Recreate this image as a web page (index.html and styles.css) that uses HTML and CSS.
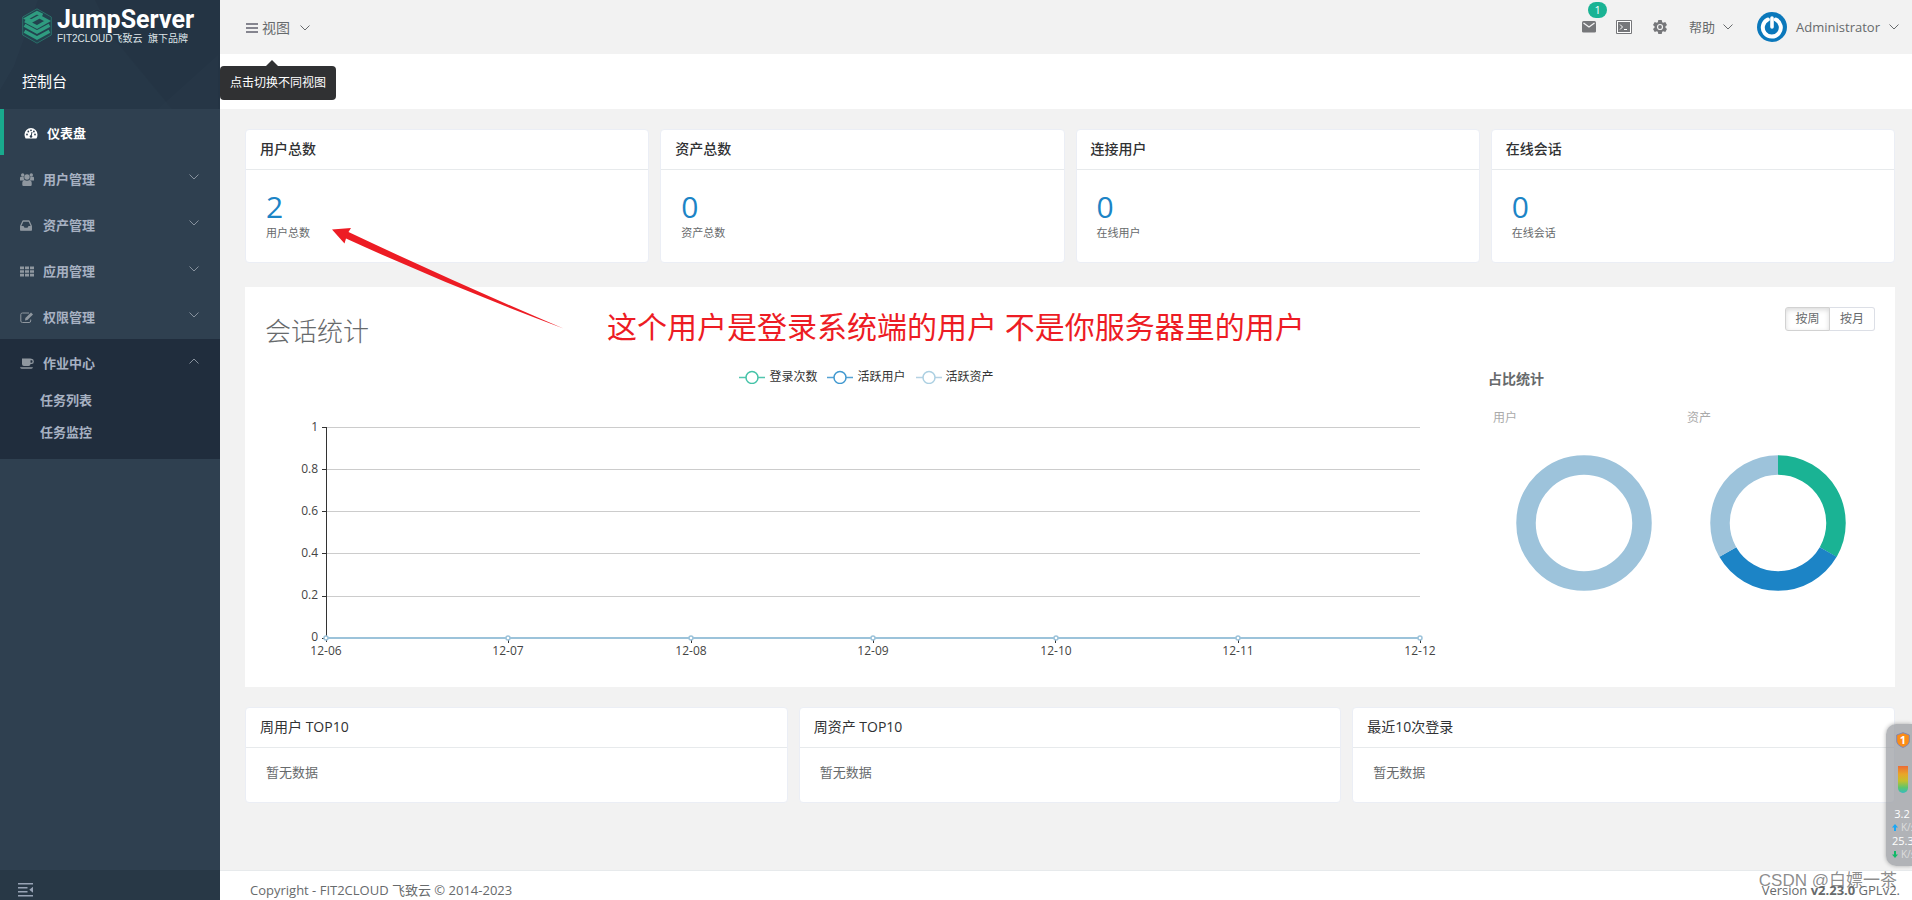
FILE: index.html
```html
<!DOCTYPE html>
<html lang="zh-CN">
<head>
<meta charset="utf-8">
<title>JumpServer</title>
<link rel="stylesheet" href="styles.css">
</head>
<body>
<svg class="defs" aria-hidden="true">
  <symbol id="chev" viewBox="0 0 10 6"><path d="M.5.5 5 5 9.5.5" fill="none" stroke="currentColor"/></symbol>
</svg>
<div class="app">
  <aside class="sidebar">
    <div class="side-head">
      <svg class="side-facets" viewBox="0 0 220 109" preserveAspectRatio="none" aria-hidden="true"><path d="M115 40 172 109H220V0H95z" fill="#22313f" opacity=".35"/><path d="M0 0H38L14 66 0 90z" fill="#2c3f4f" opacity=".4"/><path d="M158 109 218 55V109z" fill="#2b3c4b" opacity=".3"/></svg>
      <a class="brand" href="#">
        <svg class="brand-mark" viewBox="0 0 30 36" aria-hidden="true">
          <path d="M15 .8 29.300 9v18L15 35.200.7 27V9z" fill="#23424e" stroke="#2a7069"/>
          <g fill="none" stroke="#2f9c80" stroke-width="3.400"><path d="M20.500 7.200 15 4.600 4.500 10.500 9 13.200 17.500 8.700 25.500 13 15 19 3 12.800"/><path d="M2.500 17.200 15 24l12.500-6.800M2.500 23.200 15 30l12.500-6.800"/></g>
        </svg>
        <span class="brand-text"><span class="brand-name">JumpServer</span><span class="brand-sub">FIT2CLOUD飞致云&nbsp; 旗下品牌</span></span>
      </a>
      <div class="view-name">控制台</div>
    </div>
    <nav class="menu">
      <a class="item active" href="#"><svg viewBox="0 0 14 12"><path d="M7 .5A6.500 6.500 0 0 0 .5 7c0 1.500.4 2.800 1.100 4h10.800A7 7 0 0 0 13.500 7 6.500 6.500 0 0 0 7 .5z" fill="currentColor"/><g fill="#2f4050"><circle cx="3" cy="7" r=".9"/><circle cx="4.300" cy="4" r=".9"/><circle cx="7" cy="2.800" r=".9"/><circle cx="9.900" cy="4" r=".9"/><circle cx="11" cy="7" r=".9"/></g><path d="M8 4.500 7 9" stroke="#2f4050"/><circle cx="7" cy="9" r="1.300" fill="#2f4050"/></svg><span>仪表盘</span></a>
      <a class="item" href="#"><svg viewBox="0 0 14 13"><g fill="currentColor"><circle cx="2.700" cy="2" r="1.700"/><circle cx="11.300" cy="2" r="1.700"/><circle cx="7" cy="4" r="2.700"/><path d="M0 7.500V5q0-1.200 1-1.200h2.700Q3.500 6 4.500 6.600L3 7.500zM14 7.500V5q0-1.200-1-1.200h-2.700Q10.500 6 9.500 6.600L11 7.500zM2.300 12V9.500Q2.500 7.300 4.500 7q2.500 1.500 5 0 2 .3 2.200 2.500V12q0 1-1.200 1h-7q-1.200 0-1.200-1z"/></g></svg><span>用户管理</span><svg class="chev"><use href="#chev"/></svg></a>
      <a class="item" href="#"><svg viewBox="0 0 14 12"><path d="M3 1.500h6L11.300 6.500V10.500H.7V6.500z" fill="none" stroke="currentColor" stroke-width="1.300" stroke-linejoin="round"/><path d="M.5 6.500H3.500L4.500 8.300h3L8.500 6.500h3v4.300H.5z" fill="currentColor"/></svg><span>资产管理</span><svg class="chev"><use href="#chev"/></svg></a>
      <a class="item" href="#"><svg viewBox="0 0 14 12"><path d="M0 1h4v2.700H0zM5 1h4v2.700H5zM10 1h4v2.700h-4zM0 4.700h4v2.600H0zM5 4.700h4v2.600H5zM10 4.700h4v2.600h-4zM0 8.300h4V11H0zM5 8.300h4V11H5zM10 8.300h4V11h-4z" fill="currentColor"/></svg><span>应用管理</span><svg class="chev"><use href="#chev"/></svg></a>
      <a class="item" href="#"><svg viewBox="0 0 14 12"><path d="M9 1.500H2.500Q.8 1.500.8 3v6.500Q.8 11 2.500 11H9q1.700 0 1.700-1.500V8" fill="none" stroke="currentColor"/><path d="m5 9 .4-2.500L11 1l2 2-5.600 5.600z" fill="currentColor"/></svg><span>权限管理</span><svg class="chev"><use href="#chev"/></svg></a>
      <div class="group">
        <a class="item" href="#"><svg viewBox="0 0 14 12"><path d="M2 1h8.500v5.500Q10.500 8.500 8.500 8.500H4Q2 8.500 2 6.500zM0 9.700h13Q12.500 11.300 11 11.300H2Q.5 11.300 0 9.700z" fill="currentColor"/><path d="M10 2h1.500q1.700 0 1.700 1.900T11.500 5.800H10" fill="none" stroke="currentColor" stroke-width="1.300"/></svg><span>作业中心</span><svg class="chev up"><use href="#chev"/></svg></a>
        <a class="sub" href="#">任务列表</a>
        <a class="sub" href="#">任务监控</a>
      </div>
    </nav>
    <button class="collapse" aria-label="收起菜单"><svg viewBox="0 0 15 14" fill="currentColor"><path d="M0 0h15v1.500H0zM0 4h9.500v1.500H0zM0 8h9.500v1.500H0zM0 12h15v1.500H0zM15 3.700v6L11.300 6.700z"/></svg></button>
  </aside>

  <div class="main">
    <header class="topbar">
      <button class="view-btn"><svg class="bars" viewBox="0 0 12 10"><path d="M0 1h12M0 5h12M0 9h12" stroke="#85858f" stroke-width="2"/></svg><span>视图</span><svg class="chev"><use href="#chev"/></svg></button>
      <div class="tooltip" role="tooltip">点击切换不同视图</div>
      <div class="tools">
        <button class="tool mail" aria-label="消息"><svg viewBox="0 0 14 12"><path d="M0 1.500Q0 0 1.500 0h11Q14 0 14 1.500v9q0 1-1.500 1h-11Q0 11.500 0 10.500z" fill="#76777a"/><path d="m1.500 2 5.500 4 5.500-4" fill="none" stroke="#f3f3f3" stroke-width="1.300"/></svg><span class="badge">1</span></button>
        <button class="tool term" aria-label="终端"><svg viewBox="0 0 16 14"><path d="M.5.5h15v13H.5z" fill="#fff" stroke="#76777a"/><path d="M2 2h12v10H2z" fill="#76777a"/><path d="m4 4.500 2.500 2.500L4 9.500M8 9.500h3" fill="none" stroke="#fff"/></svg></button>
        <button class="tool gear" aria-label="设置"><svg viewBox="0 0 14 14"><path d="M5.300 0h3.400l.5 2.200 1 .6 2.100-.7L14 5 12.400 6.400v1.200L14 9l-1.700 2.900-2.100-.7-1 .6-.5 2.200H5.300l-.5-2.200-1-.6-2.100.7L0 9l1.600-1.400V6.400L0 5l1.700-2.900 2.100.7 1-.6z" fill="#76777a"/><circle cx="7" cy="7" r="2.500" fill="none" stroke="#f3f3f3" stroke-width="1.200"/></svg></button>
        <button class="help"><span>帮助</span><svg class="chev"><use href="#chev"/></svg></button>
        <button class="user"><svg class="avatar" viewBox="0 0 30 30"><circle cx="15" cy="15" r="15" fill="#0b78bb"/><path d="M10.800 7.500a9 9 0 1 0 8 0" fill="none" stroke="#fff" stroke-width="4" stroke-linecap="round"/><path d="M15 6v9" stroke="#fff" stroke-width="3.600" stroke-linecap="round"/></svg><span>Administrator</span><svg class="chev"><use href="#chev"/></svg></button>
      </div>
    </header>
    <div class="page-head"></div>

    <main class="content">
      <section class="cards four">
        <article class="card stat"><h2>用户总数</h2><div class="body"><a href="#">2</a><small>用户总数</small></div></article>
        <article class="card stat"><h2>资产总数</h2><div class="body"><a href="#">0</a><small>资产总数</small></div></article>
        <article class="card stat"><h2>连接用户</h2><div class="body"><a href="#">0</a><small>在线用户</small></div></article>
        <article class="card stat"><h2>在线会话</h2><div class="body"><a href="#">0</a><small>在线会话</small></div></article>
      </section>

      <section class="panel">
        <div class="panel-top">
          <h2>会话统计</h2>
          <div class="switch"><button class="on">按周</button><button>按月</button></div>
        </div>
        <div class="panel-body">
          <div class="trend">
            <div class="legend">
              <span><svg viewBox="0 0 26 14"><path d="M0 7.500h26" stroke="#1ab394" stroke-width="1.500" opacity=".75"/><circle cx="13" cy="7.500" r="6" fill="#fff" stroke="#45c3a8" stroke-width="1.500"/></svg>登录次数</span>
              <span><svg viewBox="0 0 26 14"><path d="M0 7.500h26" stroke="#1c84c6" stroke-width="1.500" opacity=".75"/><circle cx="13" cy="7.500" r="6" fill="#fff" stroke="#4199d0" stroke-width="1.500"/></svg>活跃用户</span>
              <span><svg viewBox="0 0 26 14"><path d="M0 7.500h26" stroke="#9cc3da" stroke-width="1.500" opacity=".75"/><circle cx="13" cy="7.500" r="6" fill="#fff" stroke="#acd0e2" stroke-width="1.500"/></svg>活跃资产</span>
            </div>
            <svg class="plot" viewBox="0 0 1203 260">
              <path d="M61 37.500H1155M61 79.500H1155M61 121.500H1155M61 163.500H1155M61 206.500H1155" stroke="#ccc"/>
              <path d="M61.500 37V252M57 37.500h4M57 79.500h4M57 121.500h4M57 163.500h4M57 206.500h4M57 248.500h4M243.500 249v4M426.500 249v4M608.500 249v4M790.500 249v4M973.500 249v4M1155.500 249v4" stroke="#333"/>
              <path d="M61 248H1155" stroke="#9cc3da" stroke-width="2"/>
              <g fill="#fff" stroke="#9cc3da" stroke-width="1.500"><circle cx="61" cy="248" r="2"/><circle cx="243" cy="248" r="2"/><circle cx="426" cy="248" r="2"/><circle cx="608" cy="248" r="2"/><circle cx="791" cy="248" r="2"/><circle cx="973" cy="248" r="2"/><circle cx="1155" cy="248" r="2"/></g>
              <g text-anchor="end"><text x="53" y="41">1</text><text x="53" y="83">0.8</text><text x="53" y="125">0.6</text><text x="53" y="167">0.4</text><text x="53" y="209">0.2</text><text x="53" y="251">0</text></g>
              <g text-anchor="middle"><text x="61" y="265">12-06</text><text x="243" y="265">12-07</text><text x="426" y="265">12-08</text><text x="608" y="265">12-09</text><text x="791" y="265">12-10</text><text x="973" y="265">12-11</text><text x="1155" y="265">12-12</text></g>
            </svg>
          </div>
          <div class="ratio">
            <h3>占比统计</h3>
            <div class="pies">
              <figure><figcaption>用户</figcaption><svg viewBox="0 0 136 136"><circle cx="68" cy="68" r="58" fill="none" stroke="#9dc3db" stroke-width="19.500"/></svg></figure>
              <figure><figcaption>资产</figcaption><svg viewBox="0 0 136 136" fill="none" stroke-width="19.500"><path d="M68 10A58 58 0 0 1 118.230 97" stroke="#1ab394"/><path d="M118.230 97A58 58 0 0 1 17.770 97" stroke="#1c84c6"/><path d="M17.770 97A58 58 0 0 1 68 10" stroke="#9dc3db"/></svg></figure>
            </div>
          </div>
        </div>
      </section>

      <section class="cards three">
        <article class="card"><h2>周用户 TOP10</h2><p>暂无数据</p></article>
        <article class="card"><h2>周资产 TOP10</h2><p>暂无数据</p></article>
        <article class="card"><h2>最近10次登录</h2><p>暂无数据</p></article>
      </section>
    </main>

    <footer class="footer"><span>Copyright - FIT2CLOUD 飞致云 © 2014-2023</span><span class="version">Version <b>v2.23.0</b> GPLv2.</span></footer>
  </div>
</div>

<svg class="arrow" viewBox="0 0 232 102" aria-hidden="true"><path d="M0 1.500 19 0 16.500 4 Q120 53 231.500 100.500 120 59 14 10.500L12.500 15.500z" fill="#ed1c24"/></svg>
<div class="note">这个用户是登录系统端的用户 不是你服务器里的用户</div>

<aside class="monitor">
  <svg class="shield" viewBox="0 0 14 16"><path d="M7 .7 13.300 3v6q0 4-6.300 6.500Q.7 13 .7 9V3z" fill="#fb8c17" stroke="#8087b5"/></svg><span class="count">1</span>
  <div class="gauge"></div>
  <div class="rate">3.2</div>
  <div class="unit"><svg viewBox="0 0 6 7"><path d="M3 0 6 3.500H4V7H2V3.500H0z" fill="#1aa7f5"/></svg>K/s</div>
  <div class="rate">25.3</div>
  <div class="unit"><svg viewBox="0 0 6 7"><path d="M3 7 6 3.500H4V0H2v3.500H0z" fill="#10b967"/></svg>K/s</div>
</aside>
<div class="watermark">CSDN @白嫖一茶</div>
</body>
</html>
```
FILE: styles.css
```css
* { box-sizing: border-box; }
body {
  margin: 0;
  font: 13px/20px "Open Sans", "Noto Sans CJK SC", sans-serif;
  color: #676a6c;
  background: #f3f3f4;
  position: relative;
  overflow: hidden;
}
a { color: inherit; text-decoration: none; }
button { border: 0; background: none; padding: 0; margin: 0; font: inherit; color: inherit; }
h2, h3, p, figure { margin: 0; }
svg { display: block; flex: none; }
.defs { position: absolute; width: 0; height: 0; }
.chev { width: 10px; height: 6px; }
.app { display: flex; min-height: 100vh; }

/* Sidebar */
.sidebar { flex: none; width: 220px; display: flex; flex-direction: column; background: #2f4050; color: #a7b1c2; }
.side-head { height: 109px; background: #263747; position: relative; color: #fff; }
.side-facets { position: absolute; inset: 0; width: 100%; height: 100%; }
.brand { position: relative; display: flex; gap: 5px; padding: 8px 0 0 22px; }
.brand-mark { width: 30px; height: 36px; }
.brand-text { display: flex; flex-direction: column; white-space: nowrap; }
.brand-name { font: 700 25px/24px Roboto, sans-serif; }
.brand-sub { font: 10px/14px "Liberation Sans", "Noto Sans CJK SC", sans-serif; color: #dfe4e8; }
.view-name { position: relative; padding: 25px 0 0 22px; font-size: 15px; }
.menu { flex: 1; font-weight: 600; }
.item { display: flex; align-items: center; height: 46px; padding: 2px 21px 0 20px; gap: 9px; }
.item > svg:first-child { width: 14px; height: 13px; color: #8f979f; }
.item span { flex: 1; }
.item .chev { margin-bottom: 5px; color: #87919d; }
.chev.up { transform: scaleY(-1); }
.active { color: #fff; border-left: 4px solid #19aa8d; }
.active > svg:first-child { color: #fff; }
.group { background: #202d3d; padding-bottom: 10px; }
.sub { display: block; height: 32px; padding-left: 40px; line-height: 30px; }
.collapse { height: 30px; padding: 10px 17px 0 18px; background: #283846; color: #98a3b5; }
.collapse svg { width: 15px; height: 14px; }

/* Top bar */
.main { flex: 1; min-width: 0; display: flex; flex-direction: column; }
.topbar { position: relative; height: 54px; display: flex; justify-content: space-between; padding: 0 13px 0 26px; background: #f2f2f2; }
.view-btn { display: flex; align-items: center; gap: 4px; padding-top: 2px; font-size: 14px; }
.bars { width: 12px; height: 10px; }
.view-btn .chev { margin-left: 6px; }
.tooltip { position: absolute; z-index: 3; left: 0; top: 66px; padding: 7px 10px; border-radius: 4px; background: #303133; color: #fff; font-size: 12px; }
.tooltip::before { content: ""; position: absolute; left: 46px; top: -6px; border: 6px solid transparent; border-top: 0; border-bottom-color: #303133; }
.tools { display: flex; align-items: center; }
.tool { position: relative; }
.mail svg { width: 14px; height: 12px; }
.term { margin: 0 21px 0 20px; }
.term svg { width: 16px; height: 14px; }
.gear svg { width: 14px; height: 14px; }
.badge { position: absolute; left: 6px; top: -19px; width: 19px; height: 16px; border-radius: 8px; background: #1ab394; color: #fff; font-size: 11px; line-height: 16px; }
.help { display: flex; align-items: center; gap: 8px; margin-left: 22px; }
.user { display: flex; align-items: center; gap: 9px; margin-left: 24px; }
.avatar { width: 30px; height: 30px; }
.page-head { height: 55px; background: #fff; }

/* Content */
.content { flex: 1; padding: 20px 17px 0 25px; background: #f2f2f2; }
.cards { display: grid; gap: 11px; }
.four { grid-template-columns: repeat(4, 1fr); }
.three { grid-template-columns: repeat(3, 1fr); }
.card { background: #fff; border: 1px solid #ebeef5; border-radius: 4px; }
.card h2 { height: 40px; padding: 0 14px; border-bottom: 1px solid #e7eaec; font-size: 14px; font-weight: 400; line-height: 37px; color: #303133; }
.stat h2 { font-weight: 500; }
.stat .body { height: 92px; padding: 22px 20px 0; }
.stat a { display: block; font-size: 30px; line-height: 30px; color: #1c84c6; }
.stat small { display: block; font-size: 11px; line-height: 22px; }
.card p { height: 54px; padding: 14px 20px; }
.panel { margin: 24px 0 20px; padding: 20px; background: #fff; height: 400px; }
.panel-top { display: flex; justify-content: space-between; height: 62px; }
.panel-top h2 { font-size: 26px; font-weight: 300; line-height: 48px; }
.switch { display: flex; height: 24px; }
.switch button { width: 45px; border: 1px solid #dcdfe6; border-radius: 0 3px 3px 0; font-size: 12px; line-height: 22px; }
.switch .on { border-color: #d2d2d2; border-radius: 3px 0 0 3px; box-shadow: inset 0 2px 5px rgba(0, 0, 0, .15); }
.switch button + button { border-left: 0; }
.panel-body { display: grid; grid-template-columns: 1fr 387px; gap: 20px; }
.legend { display: flex; justify-content: center; gap: 10px; height: 21px; font-size: 12px; line-height: 16px; color: #333; }
.legend span { display: flex; gap: 4px; }
.legend svg { width: 26px; height: 14px; margin-top: 1px; }
.plot { width: 100%; overflow: visible; }
.plot text { font-size: 12px; fill: #444; }
.ratio h3 { font-size: 14px; font-weight: 600; }
.pies { display: grid; grid-template-columns: 194px 193px; padding-top: 19px; }
figcaption { padding-left: 5px; font-size: 12px; color: #aaa; }
figure svg { width: 136px; height: 136px; margin: 27px 0 0 28px; }
.footer { display: flex; justify-content: space-between; height: 30px; padding: 9px 12px 0 30px; border-top: 1px solid #e7eaec; background: #fff; }

/* Annotation and overlays */
.arrow { position: absolute; left: 332px; top: 228px; width: 232px; height: 102px; }
.note { position: absolute; left: 607px; top: 305px; font-size: 30px; line-height: 44px; color: #ed1c24; white-space: nowrap; }
.monitor { position: absolute; right: 0; top: 724px; width: 26px; height: 142px; padding: 8px 0 0 6px; overflow: hidden; border-radius: 10px 0 0 10px; background: rgba(150, 153, 158, .7); box-shadow: 0 0 4px rgba(0, 0, 0, .3); color: #fff; }
.shield { width: 14px; height: 16px; margin-left: 4px; }
.count { position: absolute; left: 10px; top: 8px; width: 14px; font-size: 11px; font-weight: 700; line-height: 15px; text-align: center; }
.gauge { width: 10px; height: 27px; margin: 18px 0 14px 6px; border-radius: 0 0 5px 5px; background: linear-gradient(#ec6b35, #e9a528 30%, #c5c02c 55%, #5cc56e 80%, #35bdbd); }
.rate { font-size: 11px; line-height: 14px; text-align: center; }
.unit { display: flex; align-items: center; gap: 3px; font-size: 10px; line-height: 13px; color: #ddd; }
.unit svg { width: 6px; height: 7px; }
.watermark { position: absolute; right: 15px; top: 869px; font: 17px/24px "Liberation Sans", "Noto Sans CJK SC", sans-serif; color: rgba(90, 90, 90, .7); }
```
